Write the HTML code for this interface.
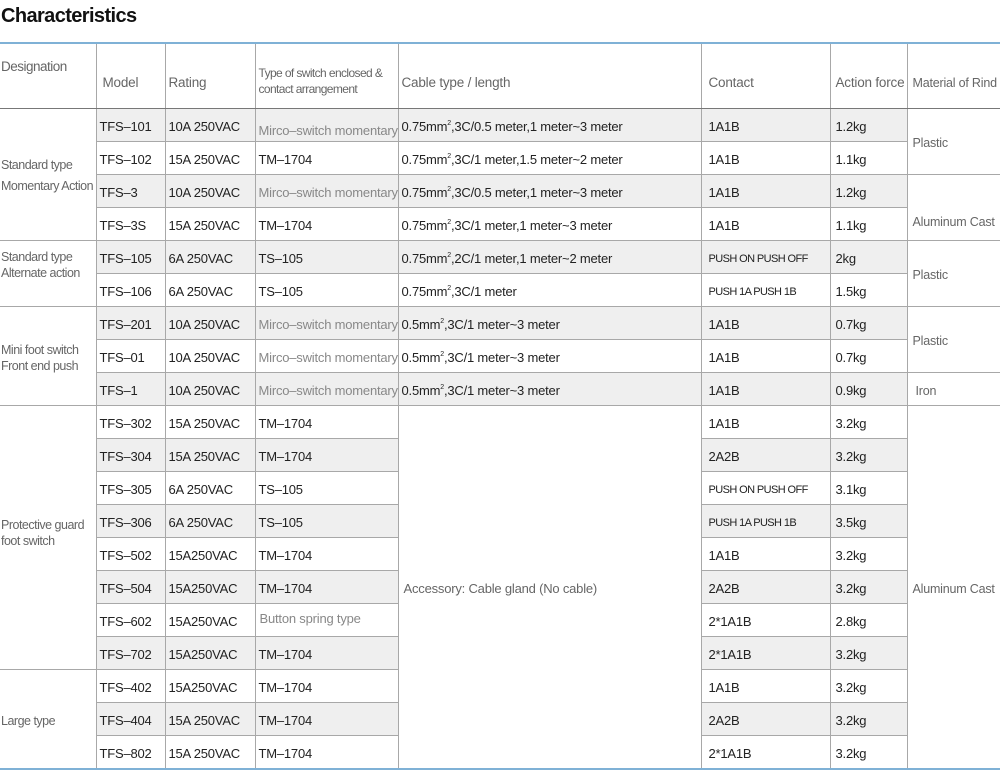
<!DOCTYPE html>
<html><head><meta charset="utf-8"><style>
body{margin:0;background:#fff;width:1000px;height:772px;overflow:hidden;font-family:"Liberation Sans",sans-serif;}
h1{position:absolute;left:1px;top:5px;margin:0;font-size:20px;font-weight:bold;letter-spacing:-0.6px;color:#111;}
table{position:absolute;left:0;top:42px;border-collapse:collapse;table-layout:fixed;width:1000px;border-top:2px solid #7fb1d6;border-bottom:2px solid #7fb1d6;}
td{border:1px solid #a8a8a8;height:29px;padding:3px 0 0 3px;font-size:13px;color:#222;white-space:nowrap;overflow:hidden;letter-spacing:-0.2px;vertical-align:middle;line-height:16px;}
tr.h td{height:50px;padding-top:14px;color:#666;font-size:13.5px;border-bottom:1px solid #777;}
td.d{border-left:none;color:#666;font-size:12.5px;letter-spacing:-0.5px;vertical-align:middle;padding-left:1px;}
td.m{border-right:none;color:#666;font-size:12.5px;padding-left:5px;}
tr.s td.x{background:#efefef;}
.g{color:#888;}
.sm{font-size:11px;letter-spacing:-0.6px;}
.r{position:relative;}
sup{font-size:7px;vertical-align:6px;line-height:0;}
</style></head><body>
<h1>Characteristics</h1>
<table>
<colgroup><col style="width:96px"><col style="width:69px"><col style="width:90px"><col style="width:143px"><col style="width:303px"><col style="width:129px"><col style="width:77px"><col style="width:93px"></colgroup>
<tr class="h"><td class="d" style="font-size:13.5px"><span class="r" style="top:-16px">Designation</span></td><td style="padding-left:6px">Model</td><td>Rating</td><td class="sm" style="font-size:12px;line-height:16px;white-space:normal"><span class="r" style="top:-2px">Type of switch enclosed &amp; contact arrangement</span></td><td>Cable type / length</td><td style="padding-left:7px">Contact</td><td style="padding-left:5px">Action force</td><td class="m" style="font-size:12.5px">Material of Rind</td></tr>
<tr class="s"><td class="d" rowspan="4" style="line-height:21px">Standard type<br>Momentary Action</td><td class="x">TFS–101</td><td class="x">10A 250VAC</td><td class="x g"><span class="r" style="top:4px">Mirco–switch momentary</span></td><td class="x">0.75mm<sup>2</sup>,3C/0.5 meter,1 meter~3 meter</td><td class="x" style="padding-left:7px">1A1B</td><td class="x" style="padding-left:5px">1.2kg</td><td class="m" rowspan="2">Plastic</td></tr>
<tr><td>TFS–102</td><td>15A 250VAC</td><td>TM–1704</td><td>0.75mm<sup>2</sup>,3C/1 meter,1.5 meter~2 meter</td><td style="padding-left:7px">1A1B</td><td style="padding-left:5px">1.1kg</td></tr>
<tr class="s"><td class="x">TFS–3</td><td class="x">10A 250VAC</td><td class="x g">Mirco–switch momentary</td><td class="x">0.75mm<sup>2</sup>,3C/0.5 meter,1 meter~3 meter</td><td class="x" style="padding-left:7px">1A1B</td><td class="x" style="padding-left:5px">1.2kg</td><td class="m" rowspan="2"><span class="r" style="top:13px">Aluminum Cast</span></td></tr>
<tr><td>TFS–3S</td><td>15A 250VAC</td><td>TM–1704</td><td>0.75mm<sup>2</sup>,3C/1 meter,1 meter~3 meter</td><td style="padding-left:7px">1A1B</td><td style="padding-left:5px">1.1kg</td></tr>
<tr class="s"><td class="d" rowspan="2"><span class="r" style="top:-10px">Standard type<br>Alternate action</span></td><td class="x">TFS–105</td><td class="x">6A 250VAC</td><td class="x">TS–105</td><td class="x">0.75mm<sup>2</sup>,2C/1 meter,1 meter~2 meter</td><td class="x sm" style="padding-left:7px">PUSH ON PUSH OFF</td><td class="x" style="padding-left:5px">2kg</td><td class="m" rowspan="2">Plastic</td></tr>
<tr><td>TFS–106</td><td>6A 250VAC</td><td>TS–105</td><td>0.75mm<sup>2</sup>,3C/1 meter</td><td class="sm" style="padding-left:7px">PUSH 1A PUSH 1B</td><td style="padding-left:5px">1.5kg</td></tr>
<tr class="s"><td class="d" rowspan="3">Mini foot switch<br>Front end push</td><td class="x">TFS–201</td><td class="x">10A 250VAC</td><td class="x g">Mirco–switch momentary</td><td class="x">0.5mm<sup>2</sup>,3C/1 meter~3 meter</td><td class="x" style="padding-left:7px">1A1B</td><td class="x" style="padding-left:5px">0.7kg</td><td class="m" rowspan="2">Plastic</td></tr>
<tr><td>TFS–01</td><td>10A 250VAC</td><td class="g">Mirco–switch momentary</td><td>0.5mm<sup>2</sup>,3C/1 meter~3 meter</td><td style="padding-left:7px">1A1B</td><td style="padding-left:5px">0.7kg</td></tr>
<tr class="s"><td class="x">TFS–1</td><td class="x">10A 250VAC</td><td class="x g">Mirco–switch momentary</td><td class="x">0.5mm<sup>2</sup>,3C/1 meter~3 meter</td><td class="x" style="padding-left:7px">1A1B</td><td class="x" style="padding-left:5px">0.9kg</td><td class="m" style="padding-left:8px">Iron</td></tr>
<tr><td class="d" rowspan="8"><span class="r" style="top:-6px">Protective guard<br>foot switch</span></td><td>TFS–302</td><td>15A 250VAC</td><td>TM–1704</td><td rowspan="11" style="color:#666;padding-left:5px">Accessory: Cable gland (No cable)</td><td style="padding-left:7px">1A1B</td><td style="padding-left:5px">3.2kg</td><td class="m" rowspan="11">Aluminum Cast</td></tr>
<tr class="s"><td class="x">TFS–304</td><td class="x">15A 250VAC</td><td class="x">TM–1704</td><td class="x" style="padding-left:7px">2A2B</td><td class="x" style="padding-left:5px">3.2kg</td></tr>
<tr><td>TFS–305</td><td>6A 250VAC</td><td>TS–105</td><td class="sm" style="padding-left:7px">PUSH ON PUSH OFF</td><td style="padding-left:5px">3.1kg</td></tr>
<tr class="s"><td class="x">TFS–306</td><td class="x">6A 250VAC</td><td class="x">TS–105</td><td class="x sm" style="padding-left:7px">PUSH 1A PUSH 1B</td><td class="x" style="padding-left:5px">3.5kg</td></tr>
<tr><td>TFS–502</td><td>15A250VAC</td><td>TM–1704</td><td style="padding-left:7px">1A1B</td><td style="padding-left:5px">3.2kg</td></tr>
<tr class="s"><td class="x">TFS–504</td><td class="x">15A250VAC</td><td class="x">TM–1704</td><td class="x" style="padding-left:7px">2A2B</td><td class="x" style="padding-left:5px">3.2kg</td></tr>
<tr><td>TFS–602</td><td>15A250VAC</td><td class="g" style="padding-left:4px"><span class="r" style="top:-3px">Button spring type</span></td><td style="padding-left:7px">2*1A1B</td><td style="padding-left:5px">2.8kg</td></tr>
<tr class="s"><td class="x">TFS–702</td><td class="x">15A250VAC</td><td class="x">TM–1704</td><td class="x" style="padding-left:7px">2*1A1B</td><td class="x" style="padding-left:5px">3.2kg</td></tr>
<tr><td class="d" rowspan="3">Large type</td><td>TFS–402</td><td>15A250VAC</td><td>TM–1704</td><td style="padding-left:7px">1A1B</td><td style="padding-left:5px">3.2kg</td></tr>
<tr class="s"><td class="x">TFS–404</td><td class="x">15A 250VAC</td><td class="x">TM–1704</td><td class="x" style="padding-left:7px">2A2B</td><td class="x" style="padding-left:5px">3.2kg</td></tr>
<tr><td>TFS–802</td><td>15A 250VAC</td><td>TM–1704</td><td style="padding-left:7px">2*1A1B</td><td style="padding-left:5px">3.2kg</td></tr>
</table>
</body></html>
